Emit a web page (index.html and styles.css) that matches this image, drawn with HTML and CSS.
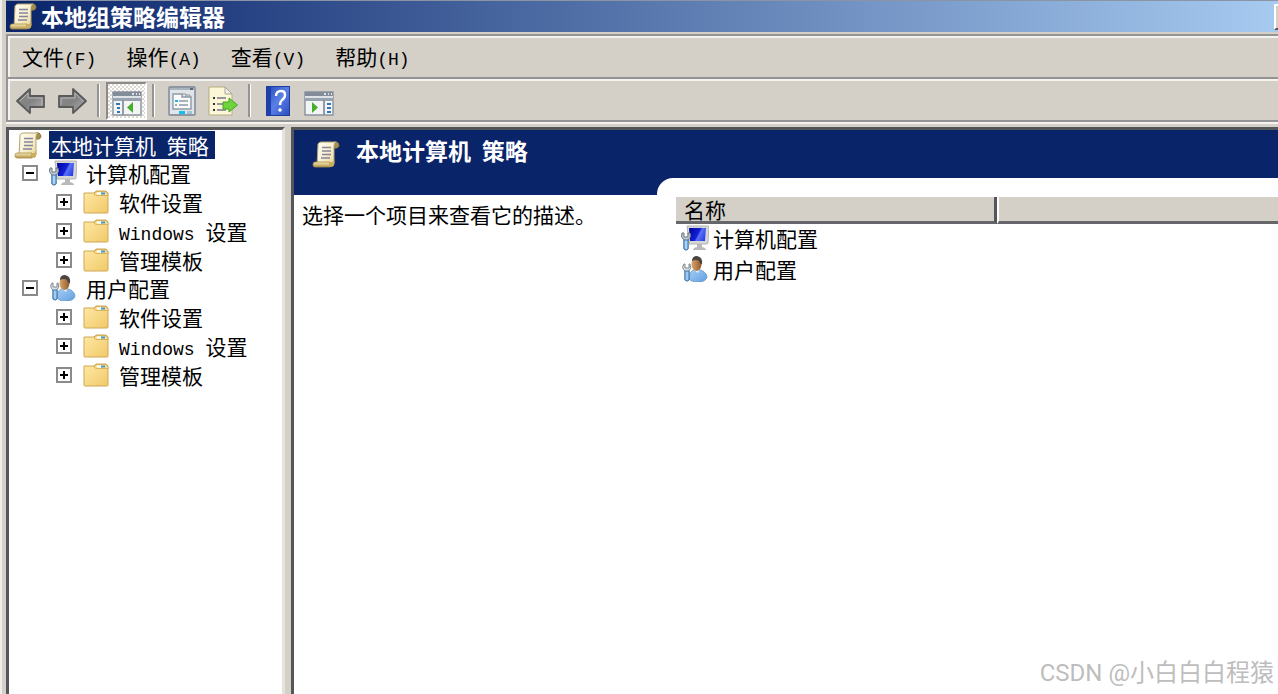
FILE: index.html
```html
<!DOCTYPE html>
<html lang="zh-CN">
<head>
    <meta charset="UTF-8">
    <meta name="viewport" content="width=device-width, initial-scale=1.0">
    <title>本地组策略编辑器</title>
    <link rel="stylesheet" href="styles.css">
</head>
<body>
    <!-- Icon sprite -->
    <svg class="sprite" aria-hidden="true">
        <defs>
            <linearGradient id="paper" x1="0" y1="0" x2="1" y2="1">
                <stop offset="0" stop-color="#fffef4"/>
                <stop offset="0.5" stop-color="#f7efd0"/>
                <stop offset="1" stop-color="#ead28c"/>
            </linearGradient>
            <linearGradient id="roll" x1="0" y1="0" x2="0" y2="1">
                <stop offset="0" stop-color="#f6e9b4"/>
                <stop offset="1" stop-color="#b4964c"/>
            </linearGradient>
            <linearGradient id="folderFill" x1="0" y1="0" x2="1" y2="1">
                <stop offset="0" stop-color="#ffe9a6"/>
                <stop offset="1" stop-color="#f0c968"/>
            </linearGradient>
            <linearGradient id="screenFill" x1="0" y1="0.3" x2="1" y2="0.7">
                <stop offset="0" stop-color="#0008a0"/>
                <stop offset="0.5" stop-color="#1420d8"/>
                <stop offset="0.6" stop-color="#5a74f4"/>
                <stop offset="1" stop-color="#2a3ce8"/>
            </linearGradient>
            <linearGradient id="arrowFill" x1="0" y1="0" x2="1" y2="1">
                <stop offset="0" stop-color="#8e8e8e"/>
                <stop offset="0.5" stop-color="#828282"/>
                <stop offset="1" stop-color="#b0b0b0"/>
            </linearGradient>
            <linearGradient id="helpFill" x1="0" y1="0" x2="1" y2="1">
                <stop offset="0" stop-color="#2448b8"/>
                <stop offset="0.5" stop-color="#5b80e6"/>
                <stop offset="1" stop-color="#2a4cc0"/>
            </linearGradient>
            <linearGradient id="shirtFill" x1="0" y1="0" x2="1" y2="1">
                <stop offset="0" stop-color="#a9d0f5"/>
                <stop offset="1" stop-color="#5f9fe0"/>
            </linearGradient>
            <linearGradient id="skinFill" x1="0" y1="0" x2="1" y2="0">
                <stop offset="0" stop-color="#dca468"/>
                <stop offset="1" stop-color="#8f5c30"/>
            </linearGradient>
        </defs>
        <symbol id="scroll" viewBox="0 0 28 28">
            <path d="M22 2 H25 Q27 3 27 6 Q26 9 22 8 Z" fill="#a58d4c" stroke="#8f7a42"/>
            <path d="M6 4 Q7 2 9 2 H24 Q22 3 22 6 V20 Q22 24 21 26 H5 Z" fill="url(#paper)" stroke="#b3a473"/>
            <path d="M3 22 H18 Q17 24 18 27 H3 Q1 27 1 24.5 Q1 22 3 22 Z" fill="url(#roll)" stroke="#a98b48" stroke-width="0.8"/>
            <path d="M18 27 Q16 23 19 22 Q22 22 22 19 Q24 27 18 27 Z" fill="#c9ae62"/>
            <path d="M10 7.5 H19 M10 11 H19 M10 14.5 H19 M9 18 H18" stroke="#85859a" stroke-width="1.5"/>
        </symbol>
        <symbol id="computer" viewBox="0 0 28 26">
            <path d="M6 1 H27 Q28 1 28 2 L27 18 Q27 19 26 19 H8 Z" fill="#d6d6d6" stroke="#b4b4b4"/>
            <path d="M8 3 H25 L24 16 H9 Z" fill="url(#screenFill)"/>
            <path d="M16 19 H21 V22 Q25 23 25 25 H12 Q12 23 16 22 Z" fill="#b7bab9"/>
            <path d="M1 8 Q-1 12 3 15 V24 Q5 26 7 24 V15 Q11 12 9 8 L7 8 V12 H3 V8 Z" fill="#c4ccd0" stroke="#69777e"/>
            <path d="M3 15 H7 V24 Q5 26 3 24 Z" fill="#a6d3fa" stroke="#3974ae"/>
        </symbol>
        <symbol id="user" viewBox="0 0 28 26">
            <path d="M8 23 Q8 14 15 13 Q25 14 26 21 Q25 26 17 26 Q10 26 8 23 Z" fill="url(#shirtFill)" stroke="#5b8dc0" stroke-width="0.7"/>
            <path d="M12 13 L17 17 L19 12 Z" fill="#f4f4f4"/>
            <ellipse cx="15.5" cy="8" rx="5" ry="7" fill="url(#skinFill)"/>
            <path d="M11 5 Q11 0 16 0 Q22 1 21 8 Q19 9 18 5 Q15 3 11 5 Z" fill="#4c4440"/>
            <path d="M3 8 Q0 12 4 15 V24 Q6 26 8 24 V15 Q11 12 9 8 L8 8 V12 H4 V8 Z" fill="#dce1e3" stroke="#7c888f"/>
            <path d="M4 15 H8 V24 Q6 26 4 24 Z" fill="#9ccaf6" stroke="#3d76b4"/>
        </symbol>
        <symbol id="folder" viewBox="0 0 26 24">
            <path d="M1 3 H11 L13 1 H23 L25 3 V22 Q25 23 24 23 H2 Q1 23 1 22 Z" fill="url(#folderFill)" stroke="#d0a854"/>
            <path d="M11 4 L13 1.5 H23 L25 4 V5.5 H13 Z" fill="#f8dc93" stroke="#cda249" stroke-width="0.7"/>
            <path d="M14 3.5 H19" stroke="#ffffff" stroke-width="2"/>
            <path d="M18 3.5 H22" stroke="#3f9be0" stroke-width="2"/>
        </symbol>
        <symbol id="arrow-left" viewBox="0 0 30 26">
            <path d="M1 13 L14 1 V8 H28 V19 H14 V25 Z" fill="url(#arrowFill)" stroke="#5a5a5a" stroke-width="1.8" stroke-linejoin="round"/>
            <path d="M4 13 L12 5 V10 H26 V17" fill="none" stroke="#b4b4b4"/>
        </symbol>
        <symbol id="arrow-right" viewBox="0 0 30 26">
            <path d="M29 13 L16 1 V8 H2 V19 H16 V25 Z" fill="url(#arrowFill)" stroke="#5a5a5a" stroke-width="1.8" stroke-linejoin="round"/>
            <path d="M26 13 L18 5 V10 H4 V17" fill="none" stroke="#b4b4b4"/>
        </symbol>
        <symbol id="tree-toggle" viewBox="0 -4 30 30">
            <path d="M1 2 H29 V25 H1 Z" fill="#f2f4f5" stroke="#8a929c" stroke-width="1.4"/>
            <path d="M1 2 H29 V6 H1 Z" fill="#828c9b"/>
            <path d="M1 6 H29 V8 H1 Z" fill="#dfe3e8"/>
            <path d="M1 8 H29 V11 H1 Z" fill="#99a3b0"/>
            <path d="M20 4 H22 M24 4 H25 M27 4 H28" stroke="#ffffff" stroke-width="1.5"/>
            <path d="M11 10 V25" stroke="#8a929c" stroke-width="1.8"/>
            <path d="M4 14 H8 M5 18 H8 M5 22 H8" stroke="#2e78bd" stroke-width="2"/>
            <path d="M21 12 V23 L15 17.5 Z" fill="#45ae2b"/>
        </symbol>
        <symbol id="action-pane" viewBox="0 -4 30 30">
            <path d="M1 2 H29 V25 H1 Z" fill="#f2f4f5" stroke="#8a929c" stroke-width="1.4"/>
            <path d="M1 2 H29 V6 H1 Z" fill="#828c9b"/>
            <path d="M1 6 H29 V8 H1 Z" fill="#dfe3e8"/>
            <path d="M1 8 H29 V11 H1 Z" fill="#99a3b0"/>
            <path d="M20 4 H22 M24 4 H25 M27 4 H28" stroke="#ffffff" stroke-width="1.5"/>
            <path d="M20 10 V25" stroke="#8a929c" stroke-width="1.8"/>
            <path d="M23 14 H27 M23 18 H27 M23 22 H27" stroke="#2e78bd" stroke-width="2"/>
            <path d="M8 12 V23 L14 17.5 Z" fill="#45ae2b"/>
        </symbol>
        <symbol id="properties" viewBox="0 0 28 30">
            <rect x="1" y="1" width="26" height="28" rx="1" fill="#e1e5e8" stroke="#8d97a3" stroke-width="1.8"/>
            <path d="M2 3 H26" stroke="#aab4bf" stroke-width="2"/>
            <path d="M22 3 H25" stroke="#37506e" stroke-width="1.5"/>
            <path d="M5 8 H14 V11 H23 V23 H5 Z" fill="#f8fafb" stroke="#8f9aa5" stroke-width="1.4"/>
            <path d="M14 8 H18 V11 M18 9 H22 V11" fill="none" stroke="#8f9aa5"/>
            <path d="M7 15 H10" stroke="#18b7e8" stroke-width="2"/>
            <path d="M11 15 H20 M11 19 H20" stroke="#8e99a4" stroke-width="1.5"/>
            <path d="M7 19 H9" stroke="#9ba8b2" stroke-width="2"/>
            <path d="M11 26.5 H17" stroke="#14bdf0" stroke-width="3"/>
            <path d="M19 26.5 H24" stroke="#a3c4d3" stroke-width="3"/>
        </symbol>
        <symbol id="export" viewBox="0 0 30 30">
            <path d="M1 1 H17 L24 8 V29 H1 Z" fill="#fcf7d7" stroke="#b7ad82"/>
            <path d="M17 1 V8 H24 Z" fill="#eeeeea" stroke="#a9a58f"/>
            <path d="M5 12 H7 M5 18 H7 M5 24 H7" stroke="#35353f" stroke-width="2"/>
            <path d="M9 12 H18 M9 18 H15 M9 24 H18" stroke="#77758c" stroke-width="1.5"/>
            <path d="M15 16 H21 V12 L29.5 19 L21 26 V23 H15 Z" fill="#6fd43b" stroke="#42a421" stroke-linejoin="round"/>
        </symbol>
        <symbol id="help" viewBox="0 0 24 30">
            <rect x="0.5" y="0.5" width="23" height="29" fill="url(#helpFill)" stroke="#1f3d9d"/>
            <path d="M1 1 H5 V29 H1 Z" fill="#1e3fae"/>
            <path d="M10 10 Q10 5 15 5 Q19 5 19 9 Q19 12 16 14 Q14 16 14 19" fill="none" stroke="#ffffff" stroke-width="2.4"/>
            <circle cx="14" cy="24" r="1.8" fill="#ffffff"/>
        </symbol>
    </svg>

    <div class="window">
        <header class="title-bar">
            <svg class="icon-scroll"><use href="#scroll"/></svg>
            <h1>本地组策略编辑器</h1>
            <button type="button" class="window-btn" aria-label="最小化"></button>
        </header>

        <div class="bars">
            <nav class="menu-bar">
                <button type="button">文件<span class="latin">(F)</span></button>
                <button type="button">操作<span class="latin">(A)</span></button>
                <button type="button">查看<span class="latin">(V)</span></button>
                <button type="button">帮助<span class="latin">(H)</span></button>
            </nav>
            <div class="tool-bar">
                <button type="button" aria-label="后退"><svg class="icon-tool"><use href="#arrow-left"/></svg></button>
                <button type="button" aria-label="前进"><svg class="icon-tool"><use href="#arrow-right"/></svg></button>
                <span class="separator"></span>
                <button type="button" class="pressed" aria-label="显示/隐藏控制台树" aria-pressed="true"><svg class="icon-tool tall"><use href="#tree-toggle"/></svg></button>
                <span class="separator"></span>
                <button type="button" aria-label="属性"><svg class="icon-tool tall"><use href="#properties"/></svg></button>
                <button type="button" aria-label="导出列表"><svg class="icon-tool tall"><use href="#export"/></svg></button>
                <span class="separator"></span>
                <button type="button" aria-label="帮助"><svg class="icon-tool tall"><use href="#help"/></svg></button>
                <button type="button" aria-label="显示/隐藏操作窗格"><svg class="icon-tool tall"><use href="#action-pane"/></svg></button>
            </div>
        </div>

        <main class="panes">
            <section class="tree-pane">
                <div class="tree-row root">
                    <svg class="icon-scroll"><use href="#scroll"/></svg>
                    <span class="selected">本地计算机<span class="latin"> </span>策略</span>
                </div>
                <ul class="tree">
                    <li>
                        <div class="tree-row branch">
                            <button type="button" class="expander open" aria-label="折叠"></button>
                            <svg class="icon-node"><use href="#computer"/></svg>
                            <span>计算机配置</span>
                        </div>
                        <ul>
                            <li class="tree-row">
                                <button type="button" class="expander" aria-label="展开"></button>
                                <svg class="icon-folder"><use href="#folder"/></svg>
                                <span>软件设置</span>
                            </li>
                            <li class="tree-row">
                                <button type="button" class="expander" aria-label="展开"></button>
                                <svg class="icon-folder"><use href="#folder"/></svg>
                                <span><span class="latin">Windows </span>设置</span>
                            </li>
                            <li class="tree-row">
                                <button type="button" class="expander" aria-label="展开"></button>
                                <svg class="icon-folder"><use href="#folder"/></svg>
                                <span>管理模板</span>
                            </li>
                        </ul>
                    </li>
                    <li>
                        <div class="tree-row branch">
                            <button type="button" class="expander open" aria-label="折叠"></button>
                            <svg class="icon-node"><use href="#user"/></svg>
                            <span>用户配置</span>
                        </div>
                        <ul>
                            <li class="tree-row">
                                <button type="button" class="expander" aria-label="展开"></button>
                                <svg class="icon-folder"><use href="#folder"/></svg>
                                <span>软件设置</span>
                            </li>
                            <li class="tree-row">
                                <button type="button" class="expander" aria-label="展开"></button>
                                <svg class="icon-folder"><use href="#folder"/></svg>
                                <span><span class="latin">Windows </span>设置</span>
                            </li>
                            <li class="tree-row">
                                <button type="button" class="expander" aria-label="展开"></button>
                                <svg class="icon-folder"><use href="#folder"/></svg>
                                <span>管理模板</span>
                            </li>
                        </ul>
                    </li>
                </ul>
            </section>

            <section class="result-pane">
                <div class="banner">
                    <svg class="icon-scroll"><use href="#scroll"/></svg>
                    <h2>本地计算机<span class="latin"> </span>策略</h2>
                </div>
                <div class="result-body">
                    <p class="description">选择一个项目来查看它的描述。</p>
                    <div class="list-sheet">
                        <table class="list">
                            <thead>
                                <tr>
                                    <th class="col-name">名称</th>
                                    <th></th>
                                </tr>
                            </thead>
                            <tbody>
                                <tr>
                                    <td colspan="2"><div class="item"><svg class="icon-node"><use href="#computer"/></svg>计算机配置</div></td>
                                </tr>
                                <tr>
                                    <td colspan="2"><div class="item"><svg class="icon-node"><use href="#user"/></svg>用户配置</div></td>
                                </tr>
                            </tbody>
                        </table>
                    </div>
                </div>
            </section>
        </main>
    </div>
    <div class="watermark">CSDN @小白白白程猿</div>
</body>
</html>
```

FILE: styles.css
```css
* {
    box-sizing: border-box;
}
body {
    margin: 0;
    background: #d4d0c8;
    color: #000;
    font-family: "Noto Sans CJK SC", sans-serif;
    font-size: 21px;
    line-height: 28px;
}
h1, h2, p, ul {
    margin: 0;
    padding: 0;
}
ul {
    list-style: none;
}
button {
    padding: 0;
    border: none;
    background: none;
    color: inherit;
    font: inherit;
}
svg {
    display: block;
    flex: none;
}
.sprite {
    position: absolute;
    width: 0;
    height: 0;
}
.latin {
    font-family: "Liberation Mono", monospace;
    font-size: 18px;
    line-height: 18px;
    white-space: pre;
}
.icon-scroll {
    width: 28px;
    height: 28px;
}
.icon-node {
    width: 28px;
    height: 26px;
}
.icon-folder {
    width: 26px;
    height: 24px;
}
.icon-tool {
    width: 30px;
    height: 26px;
}
.icon-tool.tall {
    height: 30px;
}

.window {
    display: flex;
    flex-direction: column;
    min-height: 100vh;
    padding-left: 4px;
    border-left: 2px solid #efeeea;
    overflow: hidden;
}

/* title bar */
.title-bar {
    display: flex;
    align-items: flex-start;
    gap: 4px;
    height: 32px;
    padding: 1px 0 0 3px;
    border-top: 1px solid #8c93a4;
    background: linear-gradient(to right, #0a246a, #a6caf0);
    color: #fff;
}
.title-bar h1 {
    flex: 1;
    font-size: 23px;
    line-height: 28px;
}
.window-btn {
    width: 30px;
    height: 26px;
    margin: 2px -26px 0 0;
    border: 2px solid;
    border-color: #fff #55565a #55565a #fff;
    background: #d4d0c8;
}

/* menu and tool bar */
.bars {
    margin-top: 2px;
    border: solid #949494;
    border-width: 2px 0 2px 2px;
}
.menu-bar, .tool-bar {
    display: flex;
    align-items: center;
    height: 41px;
    border-top: 2px solid #f4f3f0;
    border-left: 2px solid #f4f3f0;
}
.menu-bar {
    gap: 30px;
    margin-bottom: 2px;
    padding: 0 0 4px 12px;
}
.tool-bar {
    box-shadow: 0 -2px 0 #949494;
}
.tool-bar button {
    display: flex;
    align-items: center;
    justify-content: center;
    width: 41px;
    height: 38px;
}
.tool-bar .pressed {
    border: 2px solid;
    border-color: #8a8a8a #fff #fff #8a8a8a;
    background: repeating-conic-gradient(#fff 0 25%, #dcd9d3 0 50%) 0 0 / 4px 4px;
}
.separator {
    width: 3px;
    height: 33px;
    margin: 0 6px 0 5px;
    border-left: 2px solid #949494;
    border-right: 1px solid #fff;
}

/* panes */
.panes {
    display: flex;
    flex: 1;
    gap: 6px;
    padding-top: 3px;
    border-top: 2px solid #f4f3f0;
}
.tree-pane, .result-pane {
    border: solid #55565a;
    border-width: 3px 0 0 3px;
    background: #fff;
}
.tree-pane {
    flex: none;
    width: 279px;
    padding-left: 5px;
    border-right: 3px solid #e6e3dc;
}
.tree-row {
    display: flex;
    align-items: center;
    height: 29px;
}
.tree-row.branch {
    height: 28px;
}
.root {
    gap: 7px;
}
.selected {
    height: 28px;
    padding: 0 6px 0 2px;
    background: #0a246a;
    color: #fff;
}
.tree {
    padding-left: 8px;
}
.tree ul {
    padding-left: 34px;
}
.tree ul .icon-folder {
    margin: 0 10px 0 11px;
}
.branch .icon-node {
    margin: 0 9px 0 11px;
}
.expander {
    width: 16px;
    height: 16px;
    border: 2px solid #8a8a8a;
    background:
        linear-gradient(#000, #000) center / 8px 2px no-repeat,
        linear-gradient(#000, #000) center / 2px 8px no-repeat;
}
.expander.open {
    background: linear-gradient(#000, #000) center / 8px 2px no-repeat;
}

.result-pane {
    display: flex;
    flex: 1;
    flex-direction: column;
    min-width: 0;
}
.banner {
    display: flex;
    align-items: flex-start;
    gap: 16px;
    height: 65px;
    padding: 6px 0 0 18px;
    background: #0a246a;
    color: #fff;
}
.banner .icon-scroll {
    margin-top: 4px;
}
.banner h2 {
    font-size: 23px;
    line-height: 28px;
}
.result-body {
    display: flex;
    flex: 1;
}
.description {
    flex: none;
    width: 363px;
    padding: 5px 8px;
}
.list-sheet {
    flex: 1;
    margin-top: -17px;
    padding: 19px 0 0 19px;
    border-top-left-radius: 16px;
    background: #fff;
}
.list {
    width: 100%;
    border-collapse: separate;
    border-spacing: 0;
    table-layout: fixed;
}
.list th {
    height: 27px;
    padding: 0 8px;
    border-bottom: 3px solid #66676a;
    background: #d4d0c8;
    font-weight: normal;
    line-height: 24px;
    text-align: left;
}
.list .col-name {
    width: 321px;
    border-right: 3px solid #55565a;
}
.list .col-name + th {
    border-left: 2px solid #fff;
}
.list td {
    padding: 0;
}
.item {
    display: flex;
    align-items: center;
    gap: 4px;
    height: 31px;
    padding: 0 0 3px 5px;
}

.watermark {
    position: absolute;
    right: 4px;
    bottom: 4px;
    color: #bdbdbd;
    font-family: Roboto, "Noto Sans CJK SC", sans-serif;
    font-size: 24px;
    line-height: 34px;
}
```
